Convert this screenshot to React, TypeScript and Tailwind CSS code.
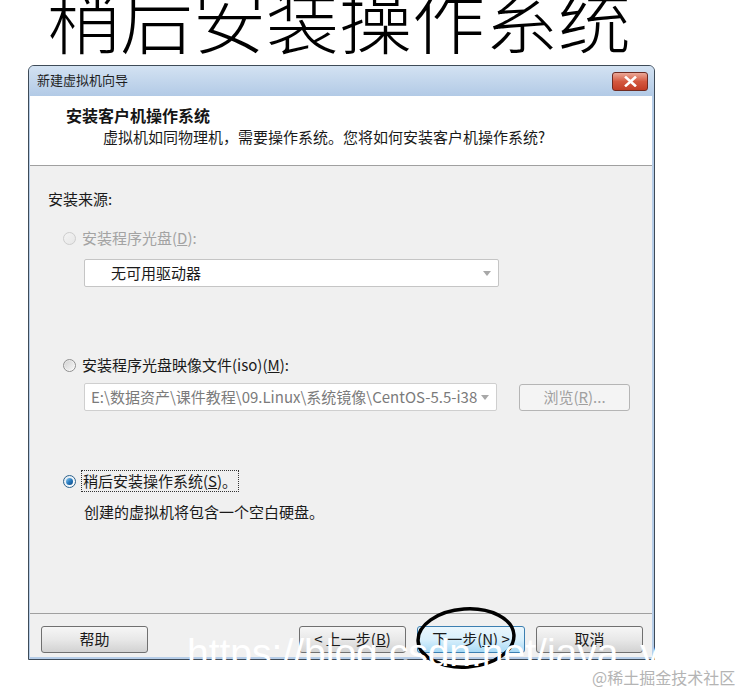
import React from 'react';

const ui = { fontFamily: '"Noto Sans CJK SC", "Liberation Sans", sans-serif' };

const Radio = ({ state }: { state: 'disabled' | 'off' | 'on' }) => {
  if (state === 'disabled') {
    return (
      <span className="w-[13px] h-[13px] rounded-full border border-[#cdcdcd] bg-gradient-to-br from-[#f4f4f4] to-[#e6e6e6] shrink-0" />
    );
  }
  if (state === 'off') {
    return (
      <span className="w-[13px] h-[13px] rounded-full border border-[#8f8f8f] bg-gradient-to-br from-[#e0e0e0] to-[#ffffff] shrink-0 flex items-center justify-center">
        <span className="w-[9px] h-[9px] rounded-full bg-gradient-to-br from-[#d4d4d4] to-[#f6f6f6]" />
      </span>
    );
  }
  return (
    <span className="w-[13px] h-[13px] rounded-full border border-[#2c628b] bg-gradient-to-br from-[#dfe9f2] to-[#ffffff] shrink-0 flex items-center justify-center">
      <span className="w-[7px] h-[7px] rounded-full bg-gradient-to-br from-[#8fd0f2] via-[#2a7cc0] to-[#0d4a86]" />
    </span>
  );
};

const Arrow = () => (
  <svg width="8" height="5" viewBox="0 0 8 5" className="shrink-0">
    <path d="M0 0h8L4 5z" fill="#a8a8a8" />
  </svg>
);

const Button = ({ label, focus }: { label: React.ReactNode; focus?: boolean }) => (
  <div
    className={
      focus
        ? 'w-[108px] h-[27px] rounded-[3px] border border-[#3c7fb1] bg-gradient-to-b from-[#eaf6fd] via-[#d9f0fc] to-[#a7d9f5] flex items-center justify-center text-[15px] text-[#1a1a1a]'
        : 'w-[107px] h-[27px] rounded-[3px] border border-[#707070] bg-gradient-to-b from-[#f6f6f6] via-[#e8e8e8] to-[#d2d2d2] flex items-center justify-center text-[15px] text-[#1a1a1a]'
    }
  >
    {label}
  </div>
);

export default function App() {
  return (
    <div className="relative w-[735px] h-[692px] bg-white overflow-hidden" style={ui}>
      {/* big caption */}
      <div className="h-[65px] overflow-hidden">
        <div className="pl-[47px] -mt-[20px] text-[73px] leading-none font-light text-black whitespace-nowrap">
          稍后安装操作系统
        </div>
      </div>

      {/* wizard window */}
      <div className="ml-[28px] w-[627px] h-[595px] border border-[#3e4b58] rounded-t-[6px] bg-[#b6cde8] flex flex-col">
        <div className="h-[30px] shrink-0 rounded-t-[5px] bg-gradient-to-b from-[#d3e2f2] to-[#b2cae6] flex items-start justify-between">
          <span className="pl-[8px] pt-[5px] text-[13px] leading-[18px] text-[#1e1e1e]">新建虚拟机向导</span>
          <div className="mt-[6px] mr-[6px] w-[36px] h-[19px] rounded-[3px] border border-[#6e2b22] bg-gradient-to-b from-[#eaa898] via-[#d4583f] to-[#c23c25] flex items-center justify-center">
            <svg width="13" height="11" viewBox="0 0 13 11">
              <path d="M2 1.5l9 8M11 1.5l-9 8" stroke="#ffffff" strokeWidth="2.6" strokeLinecap="square" />
            </svg>
          </div>
        </div>

        <div className="flex-1 flex flex-col ml-[1px] mr-[2px] mb-[2px] bg-[#f0f0f0]">
          {/* header */}
          <div className="h-[70px] shrink-0 bg-white border-b border-[#a0a0a0] flex flex-col">
            <div className="pl-[36px] pt-[9px] text-[16px] leading-[20px] font-bold text-[#151515]">安装客户机操作系统</div>
            <div className="pl-[73px] pt-[2px] text-[15px] leading-[20px] text-[#1a1a1a]">
              虚拟机如同物理机，需要操作系统。您将如何安装客户机操作系统?
            </div>
          </div>

          {/* body */}
          <div className="h-[447px] shrink-0 flex flex-col text-[15px] leading-[20px] text-[#1a1a1a]">
            <div className="pl-[18px] mt-[23px]">安装来源:</div>

            <div className="pl-[33px] mt-[19px] flex items-center gap-[6px] text-[#a3a3a3]">
              <Radio state="disabled" />
              <span>
                安装程序光盘(<span className="underline">D</span>):
              </span>
            </div>
            <div className="ml-[54px] mt-[11px] w-[415px] h-[28px] rounded-[2px] border border-[#c5c5c5] bg-white flex items-center justify-between pl-[26px] pr-[7px]">
              <span>无可用驱动器</span>
              <Arrow />
            </div>

            <div className="pl-[33px] mt-[68px] flex items-center gap-[6px]">
              <Radio state="off" />
              <span>
                安装程序光盘映像文件(iso)(<span className="underline">M</span>):
              </span>
            </div>
            <div className="ml-[54px] mt-[8px] flex items-center gap-[22px]">
              <div className="w-[413px] h-[28px] rounded-[2px] border border-[#cfcfcf] bg-white flex items-center justify-between pl-[6px] pr-[7px] text-[#7b7b7b] overflow-hidden">
                <span className="whitespace-nowrap overflow-hidden w-[386px]">E:\数据资产\课件教程\09.Linux\系统镜像\CentOS-5.5-i386</span>
                <Arrow />
              </div>
              <div className="w-[111px] h-[27px] rounded-[3px] border border-[#b5b5b5] bg-[#f4f4f4] flex items-center justify-center text-[#a0a0a0]">
                浏览(<span className="underline">R</span>)...
              </div>
            </div>

            <div className="pl-[33px] mt-[59px] flex items-center gap-[5px]">
              <Radio state="on" />
              <span className="border border-dotted border-[#333] px-[1px]">
                稍后安装操作系统(<span className="underline">S</span>)。
              </span>
            </div>
            <div className="pl-[54px] mt-[10px]">创建的虚拟机将包含一个空白硬盘。</div>
          </div>

          {/* footer */}
          <div className="flex-1 border-t border-[#a0a0a0] flex items-center justify-between pl-[11px] pr-[9px] pt-[7px]">
            <Button label="帮助" />
            <div className="flex items-center gap-[11px]">
              <Button
                label={
                  <span>
                    &lt; 上一步(<span className="underline">B</span>)
                  </span>
                }
              />
              <Button
                focus
                label={
                  <span>
                    下一步(<span className="underline">N</span>) &gt;
                  </span>
                }
              />
              <Button label="取消" />
            </div>
          </div>
        </div>
      </div>

      {/* hand-drawn ellipse */}
      <svg className="absolute left-[410px] top-[603px]" width="112" height="70" viewBox="0 0 112 70">
        <ellipse cx="56" cy="35" rx="48" ry="29" fill="none" stroke="#000" strokeWidth="3.5" transform="rotate(-4 56 35)" />
      </svg>

      {/* watermarks */}
      <div
        className="absolute left-[187px] top-[633px] text-[39px] leading-[40px] text-white whitespace-nowrap"
        style={{ fontFamily: '"Liberation Sans", Arial, sans-serif' }}
      >
        https://blog.csdn.net/java_v
      </div>
      <div
        className="absolute left-[592px] top-[667px] text-[16px] leading-[20px] text-[#b4b4b4] whitespace-nowrap"
        style={{ fontFamily: '"Noto Sans CJK SC", serif' }}
      >
        @稀土掘金技术社区
      </div>
    </div>
  );
}
